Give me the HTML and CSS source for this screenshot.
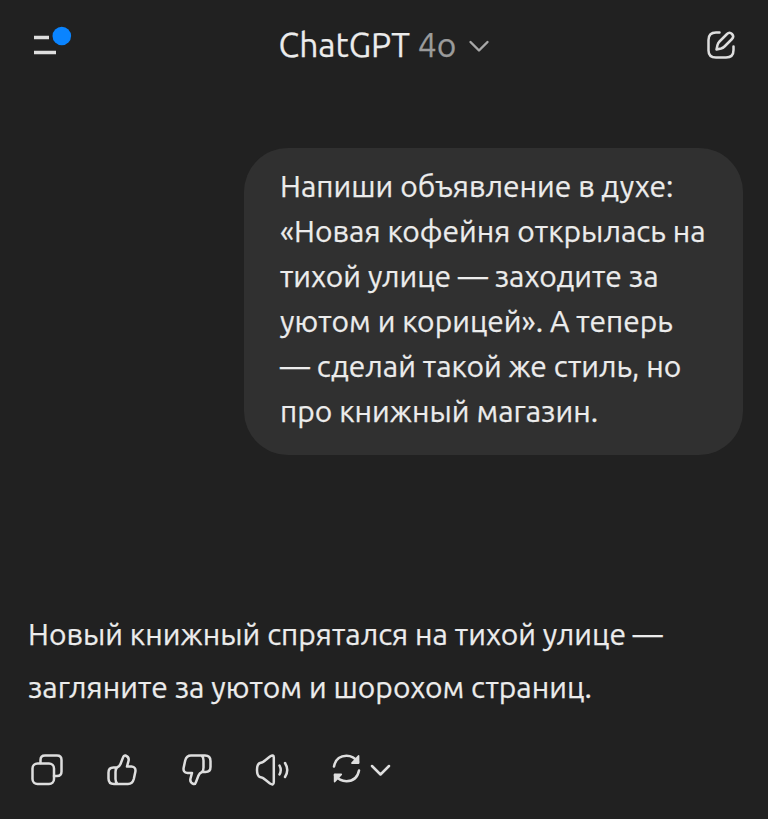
FILE: index.html
```
<!DOCTYPE html>
<html lang="ru">
<head>
<meta charset="utf-8">
<title>ChatGPT</title>
<link rel="stylesheet" href="styles.css">
</head>
<body>
<header class="topbar">
  <button class="icon-btn menu" aria-label="Меню">
    <svg width="44" height="36" viewBox="0 0 44 36" fill="none"><path d="M5 14.500H20M5 29.500H27" stroke="#dedede" stroke-width="3.600"/><circle cx="32.800" cy="13" r="9.300" fill="#0a84ff"/></svg>
  </button>
  <button class="model"><span class="name">ChatGPT</span><span class="version">4o</span>
    <svg width="24" height="16" viewBox="0 0 24 16" fill="none" stroke="#a8a8a8" stroke-width="2.400" stroke-linecap="round" stroke-linejoin="round"><path d="M3.500 5L12 13.500L20.500 5"/></svg>
  </button>
  <button class="icon-btn" aria-label="Новый чат">
    <svg class="line" width="32" height="32" viewBox="0 0 32 32"><path d="M14.500 3.500H11Q3.500 3.500 3.500 11V21.500Q3.500 28.500 11 28.500H21Q28.500 28.500 28.500 21V17.500"/><path d="M11.500 20.500L12.500 16Q13 14 14.500 12.500L22 5Q24.500 2.500 27 5Q29.500 7.500 27 10L19.500 17.500Q18 19 16 19.500Z"/></svg>
  </button>
</header>
<main>
  <section class="bubble">
    <p>Напиши объявление в духе:<br>«Новая кофейня открылась на<br>тихой улице — заходите за<br>уютом и корицей». А теперь<br>— сделай такой же стиль, но<br>про книжный магазин.</p>
  </section>
  <section class="answer">
    <p>Новый книжный спрятался на тихой улице —<br>загляните за уютом и шорохом страниц.</p>
  </section>
  <div class="actions">
    <svg class="line" width="36" height="36" viewBox="0 0 36 36"><rect x="4.500" y="12.500" width="21.500" height="20.500" rx="5"/><path d="M12.500 12V9Q12.500 4.500 17 4.500H29Q33.500 4.500 33.500 9V20.500Q33.500 25 29 25H26"/></svg>
    <svg class="line" width="36" height="36" viewBox="0 0 36 36"><path d="M14 16.500Q16.500 15.500 17.500 13L20 6.500Q20.800 4 22.500 4.500Q26.500 6 25.500 10L24 15.500H28.500Q33.300 16 32.300 21L30.800 28Q29.500 33 25 33H11Q5.500 33 5.500 27.500V21.500Q5.500 16.500 10.500 16.500H14Q12.500 18 12.500 21V28Q12.500 31.500 14.500 33"/></svg>
    <svg class="line" width="36" height="36" viewBox="0 0 36 36"><path d="M24 21Q21.500 22 20.500 24.500L18 31Q17.200 33.500 15.500 33Q11.500 31.500 12.500 27.500L14 22H9.500Q4.700 21.500 5.700 16.500L7.200 9.500Q8.500 4.500 13 4.500H27Q32.500 4.500 32.500 10V16Q32.500 21 27.500 21H24Q25.500 19.500 25.500 16.500V9.500Q25.500 6 23.500 4.500"/></svg>
    <svg class="line" width="40" height="36" viewBox="0 0 40 36"><path d="M20.800 6.500V31Q20.800 35 17 32.500L12 28.500Q10 26.500 7 26Q4 25 4 19Q4 13 7 12Q10 11.500 12 9.500L17 5.500Q20.800 3 20.800 6.500Z"/><path d="M26.500 14.500Q29 19 26.500 23.500M32 12Q36.500 19 32 26"/></svg>
    <svg class="line regen" width="66" height="36" viewBox="0 0 66 36"><path d="M6 15.500Q8 5 18.500 4.800Q25.500 4.800 30 11M31 19.500Q29 30 18.500 30.200Q11.500 30.200 7 24M44 15L52.500 23.500L61 15"/><path class="tip" d="M30.500 5V12H24ZM6.700 30.500V23.500H13.200Z"/></svg>
  </div>
</main>
</body>
</html>
```
FILE: styles.css
```
* { box-sizing: border-box; }
body { margin: 0; height: 819px; background: #212121; color: #ececec; font-family: Ubuntu, "Noto Sans", sans-serif; font-size: 29.98px; -webkit-text-stroke: 0.25px; overflow: hidden; }
button { border: 0; padding: 0; background: none; color: inherit; font: inherit; -webkit-text-stroke: inherit; }
p { margin: 0; white-space: nowrap; }
svg { display: block; }
.line { fill: none; stroke: #dedede; stroke-width: 2.5; stroke-linecap: round; stroke-linejoin: round; }
.tip { fill: #dedede; stroke-width: 1.8; }
.topbar { height: 90px; padding: 0 31px 0 29px; display: flex; justify-content: space-between; align-items: center; }
.menu { padding-bottom: 8px; }
.model { display: flex; align-items: center; margin-right: 8px; font-size: 33.6px; line-height: 40px; padding-bottom: 1px; }
.version { color: #9b9b9b; margin: 0 11px 0 8px; }
.bubble { width: 499px; height: 307px; margin: 58px 0 0 244px; padding: 16px 0 0 36px; border-radius: 44px; background: #303030; line-height: 45px; }
.answer { margin: 153px 0 0 28px; line-height: 53px; }
.actions { display: flex; gap: 39px; margin: 37px 0 0 28px; }
.regen { margin-left: -4px; }
```
